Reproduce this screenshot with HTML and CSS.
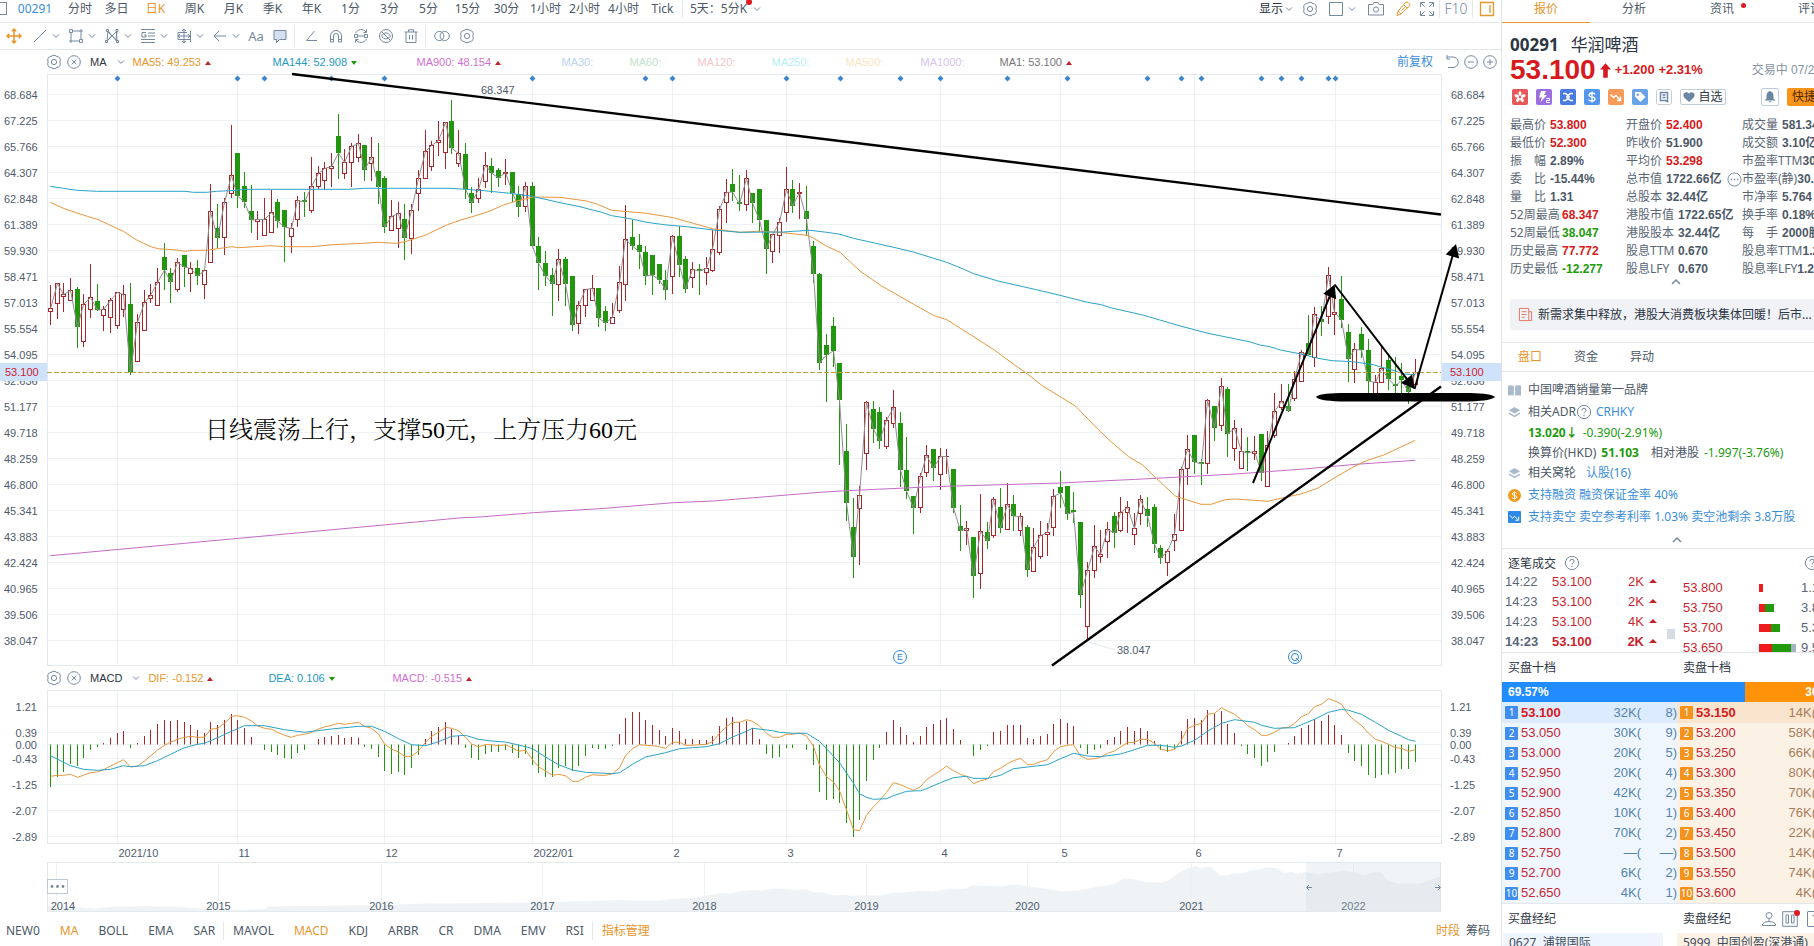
FILE: index.html
```html
<!DOCTYPE html>
<html lang="zh-CN">
<head>
<meta charset="utf-8">
<title>00291 华润啤酒</title>
<link rel="stylesheet" href="styles.css">
</head>
<body>
<svg class="defs" aria-hidden="true">
  <symbol id="gear" viewBox="0 0 16 16"><path d="M6 1.8Q8 .6 10 1.8Q10.6 2.9 12.6 2.9Q14.6 4 14.3 6.2Q13.4 8 14.3 9.8Q14.6 12 12.6 13.1Q10.6 13.1 10 14.2Q8 15.4 6 14.2Q5.4 13.1 3.4 13.1Q1.4 12 1.7 9.8Q2.6 8 1.7 6.2Q1.4 4 3.4 2.9Q5.4 2.9 6 1.8Z"/><circle cx="8" cy="8" r="2.6"/></symbol>
  <symbol id="close" viewBox="0 0 16 16"><circle cx="8" cy="8" r="6.3"/><path d="M5.7 5.7l4.6 4.6M10.3 5.7l-4.6 4.6"/></symbol>
  <symbol id="caret" viewBox="0 0 8 8"><path d="M1 2.4l3 3 3-3"/></symbol>
  <symbol id="caret-up" viewBox="0 0 10 8"><path d="M1 6l4-4 4 4" stroke-width="1.5"/></symbol>
  <symbol id="help" viewBox="0 0 16 16"><circle cx="8" cy="8" r="6.6"/><path d="M5.9 6.4q0-2.1 2.1-2.1t2.1 1.9q0 1-1.1 1.6T8 9.4M8 10.8v1.2"/></symbol>
  <symbol id="layers" viewBox="0 0 14 14"><path d="M7 1l6 3.6-6 3.6-6-3.6z" fill="currentColor" stroke="none"/><path d="M1 7.6l6 3.6 6-3.6" stroke-width="1.6"/></symbol>
</svg>
<div class="app">
  <main class="main">
    <nav class="periods" aria-label="周期">
      <button class="window-toggle" aria-label="窗口"></button>
      <button class="code">00291</button>
      <button class="period first">分时</button>
      <button class="period">多日</button>
      <button class="period active">日K</button>
      <button class="period">周K</button>
      <button class="period">月K</button>
      <button class="period">季K</button>
      <button class="period">年K</button>
      <button class="period">1分</button>
      <button class="period">3分</button>
      <button class="period">5分</button>
      <button class="period">15分</button>
      <button class="period">30分</button>
      <button class="period">1小时</button>
      <button class="period">2小时</button>
      <button class="period">4小时</button>
      <button class="period">Tick</button>
      <button class="combo">5天：5分K<span class="dot"></span><svg class="ic caret"><use href="#caret"/></svg></button>
      <div class="view-tools">
        <button class="dark">显示<svg class="ic caret"><use href="#caret"/></svg></button>
        <button class="w26" aria-label="设置"><svg class="ic"><use href="#gear"/></svg></button>
        <button class="w38" aria-label="布局"><svg class="ic" viewBox="0 0 16 16"><path d="M1.5 1.5h13v13h-13z"/></svg><svg class="ic caret"><use href="#caret"/></svg></button>
        <button class="w30" aria-label="截图"><svg class="ic" viewBox="0 0 16 16"><path d="M.5 3.5h4.3l1-2h4.4l1 2h4.3v10.500h-15z"/><circle cx="8" cy="8.500" r="2.600"/></svg></button>
        <button class="w24 active" aria-label="画笔"><svg class="ic" viewBox="0 0 16 16"><path d="M10 2l1.200-.9q.8-.4 1.600.3l1.700 1.700q.7.800.2 1.500L6 13l-4 1.600L3.200 10z M8.600 3.600l3.800 3.800M6.800 9.300l3-3M3.200 10l3 3"/></svg></button>
        <button class="w24" aria-label="全屏"><svg class="ic" viewBox="0 0 16 16"><path d="M1.500 6V1.500H6M10 1.500h4.500V6M14.500 10v4.500H10M6 14.500H1.500V10M2 2l3.700 3.700M14 2l-3.700 3.700M14 14l-3.700-3.700M2 14l3.700-3.700"/></svg></button>
        <button class="w33 sep f10">F10</button>
        <button class="w29 sep active" aria-label="侧栏"><svg class="ic" viewBox="0 0 16 16"><path d="M1.500 1.500h13v13h-13zM11 4v8" stroke-width="1.300"/></svg></button>
      </div>
    </nav>

    <div class="tools" role="toolbar" aria-label="画线工具">
      <button class="w28 active" aria-label="移动"><svg class="ic" viewBox="0 0 16 16"><path d="M8 1v14M1 8h14M5.800 3.200L8 1l2.200 2.200M5.800 12.800L8 15l2.200-2.200M3.200 5.800L1 8l2.200 2.200M12.800 5.800L15 8l-2.200 2.200" stroke-width="1.500"/></svg></button>
      <button class="drop" aria-label="线段"><svg class="ic" viewBox="0 0 16 16"><path d="M2 14L14 2"/></svg><svg class="ic caret"><use href="#caret"/></svg></button>
      <button class="drop" aria-label="矩形"><svg class="ic" viewBox="0 0 16 16"><path d="M4 3h7.500M13 5v6.500M11 13H5M3 11V5"/><path d="M1.500 1.500h3v3h-3zM11.500 11.500h3v3h-3z"/><path d="M12 2h2v2h-2zM2 12h2v2H2z"/></svg><svg class="ic caret"><use href="#caret"/></svg></button>
      <button class="drop" aria-label="形态"><svg class="ic" viewBox="0 0 16 16"><path d="M3 13L4 3l8 9.500L13 3 3 13l5-5.500 5 5.500L12.500 4M4 4l4 4"/><path d="M2.500 1.500h2v2h-2zM12 1.500h2v2h-2zM1.500 12.500h2v2h-2zM12.500 12.500h2v2h-2z"/></svg><svg class="ic caret"><use href="#caret"/></svg></button>
      <button class="drop" aria-label="江恩"><svg class="ic" viewBox="0 0 16 16"><path d="M1 1.500h14M8 5h7M8 8h7M1 11.500h14M1 14.500h14M6 4.500H2v4.500h4V7H4"/></svg><svg class="ic caret"><use href="#caret"/></svg></button>
      <button class="drop" aria-label="测量"><svg class="ic" viewBox="0 0 16 16"><path d="M8 1v14M2 4.500h9M2 4.500v7h12M14.500 3v11M2 8h12M12 6l2 2-2 2M4 6L2 8l2 2M6 3l2-2 2 2M6 13l2 2 2-2"/></svg><svg class="ic caret"><use href="#caret"/></svg></button>
      <button class="drop" aria-label="箭头"><svg class="ic" viewBox="0 0 16 16"><path d="M14 8H2.500M7 3L2 8l5 5"/></svg><svg class="ic caret"><use href="#caret"/></svg></button>
      <button class="w24 aa">Aa</button>
      <button class="w24" aria-label="注释"><svg class="ic" viewBox="0 0 16 16"><path d="M2 2.500h12v9H7.500L4.500 14.500v-3H2z" fill="#d3deee"/></svg></button>
      <span class="rule"></span>
      <button class="w25" aria-label="角度"><svg class="ic" viewBox="0 0 16 16"><path d="M11.500 3L3.500 12.500H14"/></svg></button>
      <button class="w25" aria-label="磁吸"><svg class="ic" viewBox="0 0 16 16"><path d="M2.500 14V8a5.500 5.500 0 0 1 11 0v6h-3V8a2.500 2.500 0 0 0-5 0v6zM2.500 11.500h3M10.500 11.500h3"/></svg></button>
      <button class="w25" aria-label="连续画线"><svg class="ic" viewBox="0 0 16 16"><path d="M2.500 5a6.300 6.300 0 0 1 10.500-1M13.500 11A6.300 6.300 0 0 1 3 12M13.500 1.500V4.500h-3M2.500 14.500v-3h3M4.500 8h7"/><path d="M1.500 6.500h3v3h-3zM11.500 6.500h3v3h-3z"/></svg></button>
      <button class="w25" aria-label="隐藏"><svg class="ic" viewBox="0 0 16 16"><circle cx="8" cy="8" r="6.500"/><path d="M3.500 3.500l9 9M3.500 8q2-3.200 4.500-3.200T12.500 8Q10.500 11 8 11 5.500 11 3.500 8z"/></svg></button>
      <button class="w25" aria-label="删除"><svg class="ic" viewBox="0 0 16 16"><path d="M1.500 4h13M5.500 4V1.800h5V4M3 4v10.500h10V4M6.500 7v4.500M9.500 7v4.500"/></svg></button>
      <span class="rule"></span>
      <button class="w25" aria-label="对比"><svg class="ic" viewBox="0 0 16 16"><circle cx="5.300" cy="8" r="4.600"/><circle cx="10.700" cy="8" r="4.600"/></svg></button>
      <button class="w25" aria-label="设置"><svg class="ic"><use href="#gear"/></svg></button>
    </div>

    <div class="legend">
      <button aria-label="指标设置"><svg class="ic"><use href="#gear"/></svg></button>
      <button aria-label="关闭指标"><svg class="ic"><use href="#close"/></svg></button>
      <button class="legend-name">MA<svg class="ic caret"><use href="#caret"/></svg></button>
      <div class="legend-values ma">
        <span class="c-orange">MA55: 49.253 <i class="tri up"></i></span>
        <span class="c-cyan">MA144: 52.908 <i class="tri down"></i></span>
        <span class="c-violet">MA900: 48.154 <i class="tri up"></i></span>
        <span class="p1">MA30:</span><span class="p2">MA60:</span><span class="p3">MA120:</span><span class="p4">MA250:</span><span class="p5">MA500:</span><span class="p6">MA1000:</span>
        <span class="c-gray">MA1: 53.100 <i class="tri up"></i></span>
      </div>
      <div class="legend-tools">
        <button class="adjust">前复权</button>
        <button aria-label="还原"><svg class="ic" viewBox="0 0 16 16"><path d="M3 3H9a5.200 5.200 0 0 1 0 10.500H4M3 1v4h3"/></svg></button>
        <button aria-label="缩小"><svg class="ic" viewBox="0 0 16 16"><circle cx="8" cy="8" r="6.300"/><path d="M5 8h6"/></svg></button>
        <button aria-label="放大"><svg class="ic" viewBox="0 0 16 16"><circle cx="8" cy="8" r="6.300"/><path d="M5 8h6M8 5v6"/></svg></button>
      </div>
    </div>

    <svg class="chart price" id="price" viewBox="0 74 1501 592" role="img" aria-label="日K线"></svg>

    <div class="legend">
      <button aria-label="指标设置"><svg class="ic"><use href="#gear"/></svg></button>
      <button aria-label="关闭指标"><svg class="ic"><use href="#close"/></svg></button>
      <button class="legend-name">MACD<svg class="ic caret"><use href="#caret"/></svg></button>
      <div class="legend-values macd">
        <span class="c-orange">DIF: -0.152 <i class="tri up"></i></span>
        <span class="c-cyan">DEA: 0.106 <i class="tri down"></i></span>
        <span class="c-violet">MACD: -0.515 <i class="tri up"></i></span>
      </div>
    </div>

    <svg class="chart" id="macd" viewBox="0 690 1501 172" role="img" aria-label="MACD"></svg>
    <svg class="chart" id="range" viewBox="0 862 1501 50" role="img" aria-label="时间范围"></svg>

    <nav class="indicators" aria-label="指标">
      <div class="group"><button>NEW0</button><button class="active">MA</button><button>BOLL</button><button>EMA</button><button>SAR</button></div>
      <div class="group"><button>MAVOL</button><button class="active">MACD</button><button>KDJ</button><button>ARBR</button><button>CR</button><button>DMA</button><button>EMV</button><button>RSI</button></div>
      <div class="group"><button class="active">指标管理</button></div>
      <div class="group end"><button class="active">时段</button><button>筹码</button></div>
    </nav>
  </main>

  <aside class="side">
    <div class="panel">
      <nav class="side-tabs" aria-label="资料">
        <button class="active">报价</button><button>分析</button><button>资讯<span class="dot"></span></button><button>评论</button>
      </nav>

      <section class="quote">
        <h1><b>00291</b>华润啤酒</h1>
        <div class="last">
          <strong>53.100</strong>
          <svg class="arrow" viewBox="0 0 12 16"><path d="M6 0l6 7H8.500v9h-5V7H0z"/></svg>
          <span class="change">+1.200 +2.31%</span>
          <span class="status">交易中 07/20</span>
        </div>
        <div class="badges">
          <svg class="badge" viewBox="0 0 16 16"><rect width="16" height="16" rx="2" fill="#e8585a"/><g fill="#fff"><ellipse cx="8" cy="4.600" rx="1.500" ry="2.400"/><ellipse cx="8" cy="4.600" rx="1.500" ry="2.400" transform="rotate(72 8 8)"/><ellipse cx="8" cy="4.600" rx="1.500" ry="2.400" transform="rotate(144 8 8)"/><ellipse cx="8" cy="4.600" rx="1.500" ry="2.400" transform="rotate(216 8 8)"/><ellipse cx="8" cy="4.600" rx="1.500" ry="2.400" transform="rotate(288 8 8)"/></g></svg>
          <svg class="badge" viewBox="0 0 16 16"><rect width="16" height="16" rx="2" fill="#9b6fe0"/><path d="M5 2h5L8 6h3l-6.500 7L6 8.500H3z" fill="#fff"/><path d="M10.500 9.500h3v2h-3v2h3.500" fill="none" stroke="#fff"/></svg>
          <svg class="badge" viewBox="0 0 16 16"><rect width="16" height="16" rx="2" fill="#4a7be0"/><path d="M3 4.500h2.500l2.500 2 2.500-2H13M3 11.500h2.500l2.500-2 2.500 2H13M6 8h4" fill="none" stroke="#fff" stroke-width="1.500"/></svg>
          <svg class="badge" viewBox="0 0 16 16"><rect width="16" height="16" rx="2" fill="#5396ec"/><path d="M11 5.500Q10.500 4 8 4T5 6q0 1.600 3 2t3 2q0 2-3 2t-3.200-1.500M8 2.500v11" fill="none" stroke="#fff" stroke-width="1.300"/></svg>
          <svg class="badge" viewBox="0 0 16 16"><rect width="16" height="16" rx="2" fill="#f79a5a"/><path d="M2.500 5.500l3 3 2.500-2 4 4.500M12.500 7.500v4H9" fill="none" stroke="#fff" stroke-width="1.400"/></svg>
          <svg class="badge" viewBox="0 0 16 16"><rect width="16" height="16" rx="2" fill="#68a3ea"/><path d="M3 3h5.500l5 5-5 5L3 7.500z" fill="#fff"/><circle cx="5.800" cy="5.800" r="1.200" fill="#68a3ea"/></svg>
          <svg class="badge" viewBox="0 0 16 16"><rect x=".5" y=".5" width="15" height="15" rx="2" fill="#fff" stroke="#c3ccd6"/><path d="M4.500 3.500h7V12.500l-2-1H4.500zM6.500 6h3M6.500 8.500h3" fill="none" stroke="#6b86a3" stroke-width="1.500"/></svg>
          <button class="fav"><svg viewBox="0 0 12 11"><path d="M6 10.500L1 5.800Q-.3 3.500 1.200 1.600 3.500-.5 6 2 8.500-.5 10.800 1.600 12.300 3.500 11 5.800z"/></svg>自选</button>
          <button class="bell" aria-label="提醒"><svg viewBox="0 0 12 12"><path d="M6 0Q9.500 1 9.500 5v2.500L11.500 9.500H.5L2.500 7.500V5Q2.500 1 6 0zM4.500 10.300h3L6 11.800z"/></svg></button>
          <button class="quick">快捷交易</button>
        </div>
        <dl class="stats" id="stats"></dl>
        <button class="fold" aria-label="收起"><svg class="ic"><use href="#caret-up"/></svg></button>
      </section>

      <a class="news" href="#"><svg viewBox="0 0 16 16"><path d="M1.500 1.500h10v13h-10zM11.500 5h3v9.500h-3M4 5h5M4 8h5M4 11h3"/></svg>新需求集中释放，港股大消费板块集体回暖！后市...</a>

      <nav class="sub-tabs" aria-label="盘面">
        <button class="active">盘口</button><button>资金</button><button>异动</button>
      </nav>

      <section class="facts">
        <div class="r22"><svg class="fi" viewBox="0 0 14 14"><path d="M0 2q3.500-1.500 6.300 0v10.500Q3.500 11.500 0 12.500zM7.700 2q3-1.500 6.300 0v10.500q-3.300-1-6.300 0z" fill="currentColor" stroke="none"/></svg>中国啤酒销量第一品牌</div>
        <div class="r22"><svg class="fi"><use href="#layers"/></svg>相关ADR<svg class="ic help"><use href="#help"/></svg><a href="#">CRHKY</a></div>
        <div class="r20 in green"><b>13.020↓</b><span>-0.390(-2.91%)</span></div>
        <div class="r20 in">换算价(HKD) <b class="green">51.103</b><span class="rel">相对港股</span><span class="green">-1.997(-3.76%)</span></div>
        <div class="r20"><svg class="fi"><use href="#layers"/></svg>相关窝轮<a class="warrant" href="#">认股(16)</a></div>
        <div class="r24"><svg class="fi" viewBox="0 0 14 14"><circle cx="7" cy="7" r="7" fill="#f09a1c" stroke="none"/><path d="M9.500 5Q9 3.700 7 3.700T4.600 5.300Q4.600 6.600 7 7t2.400 1.700Q9.400 10.300 7 10.300T4.500 9M7 2.500v9" stroke="#fff"/></svg><a href="#">支持融资 融资保证金率 40%</a></div>
        <div class="r20"><svg class="fi" viewBox="0 0 14 14"><rect width="14" height="13" rx="1" fill="#2e8ae6" stroke="none"/><path d="M2 4.500l3 3.500 2-2.500 3.500 4M11.500 6v4H8" stroke="#fff"/></svg><a href="#">支持卖空 卖空参考利率 1.03% 卖空池剩余 3.8万股</a></div>
        <button class="fold" aria-label="收起"><svg class="ic"><use href="#caret-up"/></svg></button>
      </section>

      <section class="ticks">
        <h2>逐笔成交<svg class="ic help"><use href="#help"/></svg><svg class="ic help end"><use href="#help"/></svg></h2>
        <div class="tick-body">
          <table class="tick-list">
            <tr><td>14:22</td><td>53.100</td><td>2K</td><td><i class="tri up"></i></td></tr>
            <tr><td>14:23</td><td>53.100</td><td>2K</td><td><i class="tri up"></i></td></tr>
            <tr><td>14:23</td><td>53.100</td><td>4K</td><td><i class="tri up"></i></td></tr>
            <tr class="now"><td>14:23</td><td>53.100</td><td>2K</td><td><i class="tri up"></i></td></tr>
          </table>
          <span class="thumb"></span>
          <table class="spread" id="spread"></table>
        </div>
      </section>

      <section>
        <div class="pair"><h2>买盘十档</h2><h2>卖盘十档</h2></div>
        <div class="ratio"><span style="width:69.57%">69.57%</span><span>30.43%</span></div>
        <div class="book">
          <table class="bid" id="bid"></table>
          <table class="ask" id="ask"></table>
        </div>
      </section>

      <section class="brokers">
        <div class="pair"><h2>买盘经纪</h2><h2>卖盘经纪
          <svg class="ic bi" viewBox="0 0 16 16"><circle cx="8" cy="4.500" r="3"/><path d="M1.500 14.500v-1.500Q3 10.500 8 10.500T14.500 13v1.500zM8 7.500v3"/></svg>
          <span class="with-dot"><svg class="ic" viewBox="0 0 16 16"><path d="M.7.7h14.600v14.600H.7zM4 4h2.500v8H4zM9.500 4H12v8H9.500z"/></svg><span class="dot"></span></span>
          <span class="one">1</span></h2></div>
        <div class="pair rows"><p class="buy">0627&nbsp; 浦银国际</p><p class="sell">5999&nbsp; 中国创盈(深港通)</p></div>
      </section>
    </div>
  </aside>
</div>
<script src="app.js"></script>
</body>
</html>
```

FILE: styles.css
```css
* { box-sizing: border-box; }
body {
  margin: 0;
  height: 100vh;
  overflow: hidden;
  background: #fff;
  color: #4c5867;
  font: 12px/18px "Noto Sans", "Noto Sans CJK SC", sans-serif;
}
button {
  margin: 0; padding: 0; border: 0; background: none;
  color: inherit; font: inherit; cursor: pointer;
  display: inline-flex; align-items: center; justify-content: center;
  white-space: nowrap; flex: none;
}
a { color: #3a8dd9; text-decoration: none; }
h1, h2, p, dl, dd, dt { margin: 0; font-weight: 400; }
table { border-collapse: collapse; border-spacing: 0; }
td { padding: 0; white-space: nowrap; }
.defs { position: absolute; width: 0; height: 0; }
.ic { width: 16px; height: 16px; fill: none; stroke: currentColor; stroke-width: 1; flex: none; color: #7589a0; }
.ic.caret { width: 8px; height: 8px; }
.active, .active .ic { color: #e8952b; }
.dot { width: 6px; height: 6px; border-radius: 50%; background: #dd1a1f; }

.app { display: flex; height: 100%; }
.main { flex: 1; min-width: 0; display: flex; flex-direction: column; }

/* period bar */
.periods { display: flex; height: 23px; padding-bottom: 5px; border-bottom: 1px solid #e4e7ea; align-items: center; }
.window-toggle { width: 7px; height: 13px; border: 1px solid #7589a0; border-left: 0; }
.code { width: 56px; color: #3a8dd9; }
.period { width: 39px; }
.period.first { width: 34px; }
.combo { position: relative; padding-left: 7px; gap: 6px; border-left: 1px solid #e4e7ea; }
.combo .dot { position: absolute; right: 9px; top: -1px; }
.view-tools { display: flex; align-items: center; margin-left: auto; height: 18px; }
.view-tools button { height: 18px; }
.view-tools .dark { color: #2c3542; gap: 2px; padding-right: 4px; }
.sep { border-left: 1px solid #e4e7ea; }
.f10 { font-size: 14px; font-weight: 300; color: #7589a0; }
.w24 { width: 24px; } .w25 { width: 25px; } .w26 { width: 26px; } .w28 { width: 28px; }
.w29 { width: 29px; } .w30 { width: 30px; } .w33 { width: 33px; }
.w38 { width: 38px; gap: 4px; }

/* drawing tools */
.tools { display: flex; align-items: center; height: 27px; border-bottom: 1px solid #e4e7ea; }
.drop { width: 36px; gap: 4px; }
.aa { font-size: 13px; color: #7589a0; }
.rule { width: 1px; height: 20px; background: #e4e7ea; margin: 0 3px 0 2px; flex: none; }

/* indicator legends */
.legend { display: flex; align-items: center; height: 24px; padding-left: 46px; font: 11px/16px "Liberation Sans", "Noto Sans CJK SC", sans-serif; gap: 4px; }
.legend-name { color: #2c3542; gap: 10px; padding-left: 4px; margin-right: 4px; }
.legend-values { display: grid; white-space: nowrap; }
.ma { grid-template-columns: 140px 144px 145px 68px 68px 74px 74px 75px 79px auto; }
.macd { grid-template-columns: 120px 124px auto; }
.legend-tools { display: flex; gap: 3px; margin-left: auto; padding-right: 3px; }
.legend-tools .adjust { color: #3a8dd9; font-size: 12px; margin-right: 8px; }
.c-orange { color: #e8952b; } .c-cyan { color: #2599c2; } .c-violet { color: #cf6fcf; } .c-gray { color: #777; }
.p1 { color: #b9d4ee; } .p2 { color: #bfe3cd; } .p3 { color: #f3c6cb; }
.p4 { color: #b5eef5; } .p5 { color: #fbe3c0; } .p6 { color: #d8c3ec; }
.tri { display: inline-block; border: 3px solid transparent; margin-left: 1px; }
.tri.up { border-bottom: 4px solid #c02026; border-top: 0; vertical-align: 1px; }
.tri.down { border-top: 4px solid #239a0d; border-bottom: 0; vertical-align: 1px; }

/* charts */
.chart { display: block; width: 100%; height: auto; flex: none; font: 11px "Liberation Sans", "Noto Sans CJK SC", sans-serif; fill: none; }
.price { overflow: visible; position: relative; }
.chart text { fill: #4f5b6c; }
.grid { stroke: #edf1f3; }
.frame { stroke: #e3e9ec; }
.up-bar { stroke: #a9262b; fill: #fff; }
.down-bar { stroke: #22960f; fill: #22960f; }
.wick-up { stroke: #a9262b; }
.wick-down { stroke: #22960f; }
.close-line { stroke: #8d8d8d; }
.line-orange { stroke: #e8983f; }
.line-cyan { stroke: #2ba2c6; }
.line-violet { stroke: #c56cc5; }
.last-line { stroke: #b9a041; stroke-dasharray: 5 2; }
.last-box { fill: #cfe2fc; }
.chart .last-text { fill: #cc1f2d; }
.event { fill: #3d86cf; }
.ring { stroke: #2e86d6; }
.chart .ring-text { fill: #2e86d6; font-size: 9px; text-anchor: middle; }
.trend { stroke: #000; stroke-width: 2.4; }
.trend.thin { stroke-width: 2; }
.ink { fill: #000; }
.chart .note { fill: #000; font: 300 24px "Liberation Serif", "Noto Serif CJK SC", "Noto Sans CJK SC", serif; }
.area { fill: #eff3f6; }
.window { fill: #ced6e0; fill-opacity: .28; }
.handle { stroke: #7589a0; }
.more { fill: #fff; stroke: #c0cad6; }
.dots { fill: #7589a0; }

/* bottom indicators */
.indicators { display: flex; flex: 1; align-items: center; padding: 4px 11px 0 6px; }
.group { display: flex; gap: 20px; }
.group + .group { margin-left: 8px; padding-left: 9px; border-left: 1px solid #e4e7ea; }
.group.end { margin-left: auto; border: 0; gap: 6px; }

/* side panel */
.side { width: 313px; flex: none; border-left: 1px solid #dfe4e8; overflow: hidden; background: #fff; }
.panel { width: 350px; }
.side-tabs { display: flex; height: 23px; border-bottom: 1px solid #e4e7ea; }
.side-tabs button { position: relative; width: 88px; height: 23px; padding-bottom: 5px; }
.side-tabs .active { border-bottom: 1px solid #e8952b; }
.side-tabs .dot { position: absolute; right: 20px; top: 3px; width: 5px; height: 5px; }

.quote { padding: 12px 0 0 8px; }
h1 { font-size: 17px; line-height: 20px; color: #2c3542; }
h1 b { margin-right: 12px; }
.last { display: flex; align-items: center; height: 30px; color: #d61a20; font-family: "Liberation Sans", "Noto Sans CJK SC", sans-serif; }
.last strong { font-size: 28px; }
.arrow { width: 11px; height: 15px; fill: #d61a20; margin: 0 4px; }
.change { font-size: 13px; font-weight: 700; }
.status { color: #8793a1; margin-left: auto; margin-right: 31px; }
.badges { display: flex; align-items: center; gap: 8px; height: 18px; margin-top: 3px; padding-left: 2px; }
.badge { width: 16px; height: 16px; flex: none; }
.fav, .bell { border: 1px solid #c3ccd6; border-radius: 2px; color: #2c3542; height: 16px; }
.fav { width: 46px; gap: 3px; }
.fav svg, .bell svg { width: 12px; height: 12px; fill: #6b86a3; }
.bell { width: 18px; height: 18px; margin-left: 27px; }
.quick { width: 58px; height: 18px; background: #f9941a; color: #4b2b08; border-radius: 2px; }

.stats { display: grid; grid-template-columns: repeat(3, 116px); grid-auto-rows: 18px; margin-top: 10px; color: #5a6675; }
.stats div { display: flex; white-space: nowrap; position: relative; }
.stats dt { min-width: 40px; }
.stats .wide { min-width: 52px; }
.stats dd { font: 700 12px/18px "Liberation Sans", "Noto Sans CJK SC", sans-serif; color: #4c5867; }
.stats .red { color: #d61a20; } .stats .green { color: #239a0d; }
.stats .more-info { position: absolute; right: 0; top: 2px; width: 15px; height: 15px; }
.fold { display: flex; width: 100%; }
.fold .ic { width: 10px; height: 8px; }
.quote .fold { height: 8px; padding-right: 11px; }
.news { display: flex; align-items: center; gap: 5px; height: 31px; margin: 13px 0 12px 8px; padding-left: 8px; background: #f0f2f6; border-radius: 3px; color: #2c3542; }
.news svg { width: 15px; height: 15px; fill: none; stroke: #e2705c; }
.sub-tabs { display: flex; height: 30px; border: solid #e4e7ea; border-width: 1px 0; }
.sub-tabs button { width: 56px; }

.facts { padding: 7px 0 0 6px; border-bottom: 1px solid #e4e7ea; }
.facts div { display: flex; align-items: center; white-space: nowrap; }
.r20 { height: 20px; } .r22 { height: 22px; } .r24 { height: 24px; }
.fi { width: 13px; height: 13px; margin-right: 7px; fill: none; stroke: currentColor; color: #a9bacc; flex: none; }
.facts .in { padding-left: 20px; gap: 5px; }
.green { color: #239a0d; }
.rel { margin-left: 7px; }
.warrant { margin-left: 10px; }
.facts .help { margin-right: 4px; }
.facts .fold { height: 21px; padding: 4px 7px 0 0; }

h2 { font-size: 12px; line-height: 29px; color: #2c3542; }
.ticks h2 { display: flex; align-items: center; gap: 8px; height: 28px; padding-left: 6px; }
.ticks .end { margin-left: auto; margin-right: 32px; }
.tick-body { display: grid; grid-template-columns: 165px 8px 1fr; height: 76px; overflow: hidden; border-bottom: 1px solid #e4e7ea; align-items: start; }
.tick-list, .spread, .bid, .ask, .ratio { font: 13px/20px "Liberation Sans", sans-serif; color: #5a6675; table-layout: fixed; }
.tick-list { width: 165px; margin-top: -5px; }
.tick-list td:nth-child(1) { width: 50px; padding-left: 3px; }
.tick-list td:nth-child(2) { width: 42px; color: #cc1f2d; }
.tick-list td:nth-child(3) { width: 50px; text-align: right; color: #cc1f2d; }
.tick-list td:nth-child(4) { padding-left: 4px; }
.tick-list .tri { border-left-width: 4px; border-right-width: 4px; vertical-align: 3px; }
.now { font-weight: 700; }
.thumb { height: 10px; background: #d5dbe3; margin-top: 52px; }
.spread { margin: 1px 0 0 8px; width: 169px; }
.spread td:nth-child(1) { width: 76px; color: #cc1f2d; }
.spread td:nth-child(2) { width: 42px; }
.spread .stack { display: flex; height: 8px; }
.s-red { background: #ee1c1c; } .s-green { background: #239a0d; } .s-gray { background: #a4b3c2; }

.pair { display: grid; grid-template-columns: 1fr 1fr; height: 29px; }
.pair h2 { padding-left: 6px; display: flex; align-items: center; }
.ratio { display: flex; height: 20px; color: #fff; font-size: 12px; font-weight: 700; background: #ff9209; justify-content: space-between; }
.ratio span:first-child { background: #218cff; padding-left: 6px; }
.ratio span:last-child { padding-right: 6px; }
.book { display: grid; grid-template-columns: 1fr 1fr; border-bottom: 1px solid #e4e7ea; }
.bid { background: #eff6fe; } .ask { background: #fcf1e5; }
.book tr { height: 20px; }
.book tr:first-child { height: 21px; }
.bid tr:first-child { background: #dcebfd; } .ask tr:first-child { background: #f9e4cd; }
.book td:nth-child(1) { width: 19px; padding-left: 3px; }
.book td:nth-child(2) { width: 50px; color: #c32733; }
.book td:nth-child(3) { width: 70px; text-align: right; }
.book td:nth-child(4) { width: 36px; text-align: right; }
.book tr:first-child td:nth-child(2) { font-weight: 700; color: #d61a20; }
.bid td { color: #5384b0; } .ask td { color: #a87d5c; }
.level { display: block; width: 13px; height: 13px; border-radius: 1px; color: #fff; font: 10px/13px "Noto Sans", sans-serif; text-align: center; }
.bid .level { background: #3f8eee; } .ask .level { background: #f5921c; }
.bi { margin-left: 30px; }
.with-dot { position: relative; display: flex; margin-left: 5px; }
.with-dot .dot { position: absolute; right: -2px; top: -1px; }
.one { width: 16px; height: 16px; margin-left: 9px; border: 1px solid #7589a0; border-radius: 1px; line-height: 14px; padding-left: 3px; color: #7589a0; }
.rows { height: 20px; line-height: 20px; color: #3f4b5a; }
.rows p { padding-left: 6px; white-space: nowrap; }
.buy { background: #eef5fe; margin: 0 14px 0 1px; }
.sell { background: #fcf1e5; }
```

FILE: app.js
```js
const NS = 'http://www.w3.org/2000/svg';
function add(parent, tag, attrs, text) {
  const el = document.createElementNS(NS, tag);
  for (const k in attrs) el.setAttribute(k, attrs[k]);
  if (text !== undefined) el.textContent = text;
  parent.appendChild(el);
  return el;
}
const xOf = i => Math.floor(50.4 + 6.69 * i) + 0.5;
const pairs = s => s.trim().split(/\s+/).map(p => p.split(',').map(Number));
const polyline = (svg, cls, pts) => add(svg, 'polyline', { class: cls, points: pts.map(p => p.join(',')).join(' ') });

/* Candles: direction, body top, body bottom, high, low (thirds of a pixel). */
const early = `r715,725,645,762 r640,701,640,744 r673,679,641,725 r661,691,624,691 g657,773,651,833 r703,815,672,830 r682,718,582,743 g694,721,642,721 r718,737,708,782 r691,743,685,788
r667,767,667,775 r673,718,645,740 g702,906,640,914 r757,874,733,874 r697,782,662,782 r676,685,642,698 r637,706,594,706 g561,602,519,659 g609,638,594,698 r577,659,564,665
g556,593,556,648 r595,610,576,665 g594,620,570,644 r601,643,601,686 r424,577,342,577 g475,506,403,533 r397,502,384,553 r316,370,166,383 g249,380,249,413 g348,398,307,413
g423,452,345,488 r449,455,423,507 r448,496,385,496 r427,487,360,487 g397,455,388,473 g420,473,420,575 r475,500,460,546 r391,448,380,470 g391,398,367,440 r348,422,262,428
r310,350,288,356 r295,331,276,358 r289,295,250,348 g198,251,132,326 r277,310,238,325 r229,277,220,350 r220,262,193,275 g226,302,226,332 r262,280,202,332 g303,353,219,399
g324,473,318,486 r439,482,391,482 r430,476,397,533 g447,506,403,567 r421,506,403,551 r325,370,301,422 r244,325,181,325 r226,290,214,301 r211,217,154,257 r157,247,157,296
g153,236,91,251 r250,281,181,290 g252,357,220,386 g369,401,351,428 r358,385,324,398 r286,334,247,352 g289,311,264,367 g300,326,294,350 r307,309,267,343 g307,370,307,394
g373,413,349,440 r349,410,337,425 g349,530,337,530 g528,581,501,659 g579,620,543,645 g615,644,595,735 r568,644,538,692 g567,644,561,707 g618,765,618,780 r706,761,694,791
r658,707,658,740 r655,691,616,691 g654,746,654,770 g723,761,708,782 r742,761,699,761 r637,721,588,727 r508,643,405,691 g501,528,450,537 g525,548,492,594 g546,620,528,644
g555,615,555,674 g582,630,582,641 g630,662,601,689 r499,619,495,671 g498,585,469,620 g567,659,559,668 r598,622,577,653 g597,605,583,674 r595,608,562,644 r538,602,482,605
r418,547,409,553 r367,398,327,458 g342,366,297,390 g396,404,315,422 r325,404,301,422 g369,399,369,458 g357,450,357,480 g450,537,450,611 r492,545,492,578 r457,496,445,547
r358,428,291,454 g357,410,331,428 r367,369,339,446 g423,449,348,495 g528,614,514,638 g612,881,609,899 g825,855,793,995 g768,843,741,890 g879,990,879,1182 g1143,1301,1062,1350
g1371,1461,1284,1523 r1276,1316,1248,1484 r997,1151,993,1199 g1017,1077,993,1118 g1026,1115,1011,1136 r1051,1130,1042,1136 r1012,1060,961,1073 g1059,1202,1026,1250 g1200,1265,1101,1286 g1278,1316,1278,1391
r1219,1313,1209,1328 r1156,1208,1126,1220 g1137,1196,1137,1230 r1159,1214,1134,1259 r1158,1160,1137,1210 g1197,1316,1197,1328 g1368,1383,1305,1440`;
const late = `r985,991,965,1032 g1011,1130,1011,1193 r993,1121,882,1166 g997,1025,968,1044 r898,1007,893,1013 g921,986,864,998 r912,989,850,989 g912,950,885,990 r949,991,939,1005 g982,1112,975,1130
r1042,1115,985,1115 r1006,1070,964,1076 r997,1004,969,1065 r889,983,868,1007 g861,879,813,923 g858,944,858,959 g930,938,877,966 g966,1187,966,1223 r1111,1280,1086,1318 r1039,1112,976,1133
r1063,1070,991,1086 r988,1024,966,1071 g948,1001,936,1043 r937,991,892,994 r922,937,903,996 r985,1003,939,1033 r898,940,885,972 g927,948,892,980 g921,1034,912,1056 g1045,1076,1035,1091
r1054,1088,1049,1127 r1003,1022,942,1052 r808,992,802,992 r748,805,706,853 g705,788,705,821 g786,794,777,854 r601,791,598,821 g618,686,618,722 r559,677,534,692 g567,704,561,768
r685,745,660,782 r754,806,685,806 g753,760,713,812 r754,760,708,779 g702,821,702,842 r736,860,694,860 r634,707,579,713 r603,622,553,628 g618,635,553,635 r538,596,515,602
r457,544,451,544 g429,467,347,467 r343,473,321,500 g357,366,318,407 r226,350,201,371 r337,343,270,402 g297,362,228,383 g396,477,372,543 r448,509,430,548 g402,452,381,473
g450,543,417,580 r547,590,527,595 r505,548,440,548 g480,538,470,567 g552,560,473,580 g528,540,490,590 g560,578,555,610 r517,553,477,560`;
const parse = (s, origin) => s.trim().split(/\s+/).map(t => {
  const [top, bottom, high, low] = t.slice(1).split(',').map(v => Math.floor(origin + v / 3));
  return { up: t[0] === 'r', top, bottom, high, low };
});
const candles = parse(early, 70).concat(parse(late, 200));

const ma144 = '151,349 190,355 230,361 290,364 555,364 580,367 620,367 650,364 690,362 740,358 1050,358 1090,355 1350,355 1440,361 1530,370 1597,379 1680,398 1740,410 1780,421 1800,425 1835,437 1890,446 1940,457 2000,465 2060,470 2140,480 2220,487 2350,486 2380,484 2430,481 2480,487 2520,493 2560,505 2620,518 2690,534 2740,546 2840,577 2890,597 2921,611 2994,633 3087,654 3180,676 3262,697 3304,704 3335,714 3428,735 3541,768 3624,790 3748,815 3779,825 3810,830 3841,840 3903,852 3954,865 3996,872 4058,875 4120,884 4182,902 4213,912 4246,914';
const ma55 = '151,397 190,415 240,432 295,449 370,484 410,510 455,531 475,536 530,540 555,544 580,541 620,541 695,530 715,533 815,527 850,530 935,530 1000,524 1090,520 1130,517 1190,520 1215,515 1240,507 1275,496 1340,465 1380,451 1440,433 1470,423 1510,405 1550,393 1600,381 1680,382 1760,393 1790,402 1835,421 1940,430 2020,443 2080,460 2140,477 2220,487 2270,484 2340,487 2420,496 2440,504 2480,529 2520,547 2580,603 2640,645 2740,702 2800,736 2840,749 2900,787 2983,840 3045,886 3076,907 3128,948 3226,1008 3293,1077 3335,1117 3386,1160 3428,1185 3469,1225 3526,1278 3562,1290 3603,1303 3634,1303 3675,1289 3706,1287 3805,1294 3841,1285 3903,1272 3954,1254 3996,1228 4058,1192 4099,1172 4151,1155 4246,1111';
const ma900 = '151,1457 694,1407 1388,1343 1440,1341 1600,1328 1800,1316 2020,1298 2140,1293 2460,1267 2540,1262 2800,1250 2940,1246 3180,1239 3304,1233 3469,1225 3706,1212 3913,1197 4068,1183 4246,1171';
const months = [[117.5, '2021/10'], [237.5, '11'], [384.5, '12'], [532.5, '2022/01'], [672.5, '2'], [786.5, '3'], [940.5, '4'], [1060.5, '5'], [1194.5, '6'], [1335.5, '7']];

function drawPrice() {
  const svg = document.getElementById('price');
  add(svg, 'rect', { class: 'frame', x: 47.5, y: 74.5, width: 1394, height: 591 });
  months.forEach(([x]) => add(svg, 'path', { class: 'grid', d: `M${x} 75V665` }));
  const labels = '68.684 67.225 65.766 64.307 62.848 61.389 59.930 58.471 57.013 55.554 54.095 52.636 51.177 49.718 48.259 46.800 45.341 43.883 42.424 40.965 39.506 38.047'.split(' ');
  labels.forEach((t, k) => {
    const y = 94.5 + 26 * k;
    add(svg, 'path', { class: 'grid', d: `M48 ${y}H1441` });
    add(svg, 'text', { x: 4, y: y + 4 }, t);
    add(svg, 'text', { x: 1451, y: y + 4 }, t);
  });
  [[0, 47], [1442, 59]].forEach(([x, width]) => add(svg, 'rect', { class: 'last-box', x, y: 363, width, height: 18 }));
  add(svg, 'text', { class: 'last-text', x: 5, y: 376 }, '53.100');
  add(svg, 'text', { class: 'last-text', x: 1450, y: 376 }, '53.100');
  [117, 237, 264, 331, 384, 532, 645, 672, 786, 840, 900, 940, 1007, 1067, 1147, 1181, 1201, 1261, 1281, 1301, 1328, 1335]
    .forEach(x => add(svg, 'path', { class: 'event', d: `M${x + 0.5} 75.500l3 3-3 3-3-3z` }));

  candles.forEach((c, i) => {
    const x = xOf(i);
    if (c.up) {
      add(svg, 'path', { class: 'wick-up', d: `M${x} ${c.high}V${c.top}M${x} ${c.bottom + 1}V${c.low + 1}` });
      add(svg, 'rect', { class: 'up-bar', x: x - 2, y: c.top + 0.5, width: 4, height: Math.max(0.01, c.bottom - c.top) });
    } else {
      add(svg, 'path', { class: 'wick-down', d: `M${x} ${c.high}V${c.low + 1}` });
      add(svg, 'rect', { class: 'down-bar', x: x - 2, y: c.top + 0.5, width: 4, height: Math.max(1, c.bottom - c.top - 1) });
    }
  });
  polyline(svg, 'close-line', candles.map((c, i) => [xOf(i), c.up ? c.top + 0.5 : c.bottom]));
  const scaled = s => pairs(s).map(([x, y]) => [(x / 3).toFixed(1), (70 + y / 3).toFixed(1)]);
  polyline(svg, 'line-violet', scaled(ma900));
  polyline(svg, 'line-orange', scaled(ma55));
  polyline(svg, 'line-cyan', scaled(ma144));
  add(svg, 'path', { class: 'last-line', d: 'M47 372.500H1441' });

  add(svg, 'text', { x: 481, y: 94 }, '68.347');
  add(svg, 'text', { x: 1117, y: 654 }, '38.047');
  add(svg, 'path', { class: 'frame', d: 'M1089 642L1115 650' });
  add(svg, 'text', { class: 'note', x: 205, y: 438 }, '日线震荡上行，支撑50元，上方压力60元');

  add(svg, 'circle', { class: 'ring', cx: 900, cy: 657, r: 6.5 });
  add(svg, 'text', { class: 'ring-text', x: 900, y: 660 }, 'E');
  add(svg, 'circle', { class: 'ring', cx: 1295, cy: 657, r: 6.5 });
  add(svg, 'circle', { class: 'ring', cx: 1295, cy: 657, r: 3.5 });
  add(svg, 'path', { class: 'ring', d: 'M1296 658l3 3' });

  add(svg, 'path', { class: 'trend', d: 'M292 74L1441 214.500' });
  add(svg, 'path', { class: 'trend', d: 'M1052 665.500L1441 386.500' });
  [[1253, 483, 1334.6, 284.5], [1334.6, 284.5, 1414.5, 389], [1414.5, 389, 1456, 244]].forEach(([x1, y1, x2, y2]) => {
    const a = Math.atan2(y2 - y1, x2 - x1);
    add(svg, 'path', { class: 'trend thin', d: `M${x1} ${y1}L${x2 - 8 * Math.cos(a)} ${y2 - 8 * Math.sin(a)}` });
    add(svg, 'path', { class: 'ink', d: 'M0 0L-13 -7V7z', transform: `translate(${x2} ${y2}) rotate(${a * 180 / Math.PI})` });
  });
  add(svg, 'path', { class: 'ink', d: 'M1316 397Q1318 393.500 1340 393H1470Q1492 393.500 1495 397Q1492 400.500 1470 401.500H1340Q1318 400.500 1316 397z' });
}

const bars = '380 352 336 311 318 293 270 261 250 235 219 213 263 249 229 210 192 181 184 181 187 195 210 220 187 195 180 163 180 203 232 254 270 276 285 294 296 279 270 254 237 232 228 226 235 231 235 261 267 291 333 341 336 344 323 285 237 214 202 187 207 227 263 293 299 282 276 276 270 278 293 282 315 338 350 350 323 317 333 317 287 263 266 266 257 222 175 156 156 181 195 210 228 205 214 238 238 240 240 228 199 175 171 187 184 205 237 282 293 291 263 263 254 269 315 396 420 417 429 489 530 480 362 299 263 217 181 202 225 247 229 200 192 181 175 208 240 254 288 269 258 217 214 196 196 196 235 237 229 223 193 178 189 199 264 282 270 263 240 231 213 201 213 205 213 243 269 275 267 214 178 175 180 151 162 154 193 220 258 282 293 318 305 276 254 249 229 205 196 178 184 166 196 226 278 302 318 344 353 344 341 338 326 326 305'.split(' ').map(Number);
const dif = '349 346 346 343 352 346 338 336 329 318 308 299 321 318 303 288 270 256 247 238 232 229 232 232 208 205 190 169 167 172 183 197 205 208 217 226 232 226 223 217 207 201 196 190 193 190 187 199 205 222 252 267 276 289 289 273 247 229 217 202 205 212 232 252 260 254 254 257 254 264 274 271 299 320 333 346 343 347 364 364 352 344 346 346 341 323 287 266 254 256 257 260 265 247 247 256 256 254 253 245 220 200 187 187 179 184 198 220 232 232 223 223 219 228 259 315 350 366 392 450 509 512 466 440 422 397 368 374 382 391 380 359 345 332 318 332 343 349 371 362 357 335 325 311 302 295 314 313 305 299 275 260 256 254 288 298 296 292 280 273 261 248 247 238 238 250 267 272 268 240 206 196 190 163 160 143 153 163 179 196 209 226 226 217 204 202 190 170 161 140 133 116 122 133 164 181 196 220 238 244 253 263 265 274 269'.split(' ').map(Number);
const dea = '0,287 3,317 5,328 7,331 9,328 11,317 12,320 14,317 16,302 18,283 20,263 22,253 23,250 25,233 27,214 29,197 32,197 35,209 38,217 42,207 46,199 48,199 50,214 52,236 54,254 56,257 58,245 60,229 62,226 64,238 66,243 68,246 71,260 72,266 74,291 76,314 78,330 80,337 84,341 85,338 87,313 89,291 92,278 94,266 96,263 98,260 100,251 102,231 104,214 105,205 108,212 109,217 111,220 113,220 115,244 118,308 120,370 121,401 122,412 123,418 125,416 126,407 128,394 130,392 131,386 133,368 135,353 137,349 138,355 140,355 142,346 144,326 146,321 149,314 151,296 153,280 155,288 157,290 160,282 162,269 164,256 166,256 168,262 169,258 171,241 173,214 175,190 177,179 180,187 181,196 183,205 186,203 187,194 189,178 191,157 193,148 194,151 196,163 198,187 200,211 202,229 203,239 204,244';

function drawMacd() {
  const svg = document.getElementById('macd');
  add(svg, 'rect', { class: 'frame', x: 47.5, y: 690.5, width: 1394, height: 153 });
  months.forEach(([x, label]) => {
    add(svg, 'path', { class: 'grid', d: `M${x} 691V843` });
    add(svg, 'text', { x: x + 1, y: 857 }, label);
  });
  [[706.5, '1.21'], [732.5, '0.39'], [744.5, '0.00'], [758.5, '-0.43'], [784.5, '-1.25'], [810.5, '-2.07'], [836.5, '-2.89']].forEach(([y, t]) => {
    add(svg, 'path', { class: 'grid', d: `M48 ${y}H1441` });
    add(svg, 'text', { x: 37, y: y + 4, 'text-anchor': 'end' }, t);
    add(svg, 'text', { x: 1450, y: y + 4 }, t);
  });
  bars.forEach((v, i) => {
    if (v !== 254) add(svg, 'path', { class: v < 254 ? 'wick-up' : 'wick-down', d: `M${xOf(i)} 744.500V${Math.round(660 + v / 3)}` });
  });
  polyline(svg, 'line-orange', dif.map((v, i) => [xOf(i), (660 + v / 3).toFixed(1)]));
  polyline(svg, 'line-cyan', pairs(dea).map(([i, v]) => [xOf(i), (660 + v / 3).toFixed(1)]));
}

const history = '48,736 77,742 95,746 110,741 145,738 180,741 205,747 235,750 266,747 268,739 330,737 400,734 420,731 480,729 560,726 600,722 619,720 638,722 657,722 676,716 699,712 704,708 719,700 730,701 742,693 753,690 761,692 772,687 784,686 791,690 807,688 814,698 822,696 833,706 845,704 853,708 868,706 883,706 891,699 906,697 918,692 933,694 944,689 967,686 971,676 1002,679 1013,673 1025,677 1040,684 1063,694 1082,690 1097,680 1113,674 1124,655 1136,659 1143,666 1162,668 1170,658 1177,642 1187,626 1195,618 1200,624 1210,620 1215,632 1220,647 1228,645 1233,640 1243,640 1250,632 1260,628 1267,622 1277,624 1283,638 1292,636 1297,642 1305,635 1317,643 1330,638 1343,632 1350,635 1357,638 1362,646 1367,642 1377,636 1383,640 1385,655 1393,667 1400,671 1420,671 1430,660 1437,652 1441,652';

function drawRange() {
  const svg = document.getElementById('range');
  const pts = pairs(history);
  let d = 'M48 911';
  let k = 0;
  for (let x = 48; x <= 1441; x += 2) {
    while (k < pts.length - 2 && pts[k + 1][0] < x) k++;
    const [x0, y0] = pts[k], [x1, y1] = pts[k + 1];
    const v = y0 + (y1 - y0) * (x - x0) / (x1 - x0) + 2 * Math.sin(x * 1.7);
    d += `L${x} ${(660 + v / 3).toFixed(1)}`;
  }
  add(svg, 'path', { class: 'area', d: d + 'L1441 911z' });
  const years = [[56.5, 2014], [218.5, 2015], [381.5, 2016], [542.5, 2017], [704.5, 2018], [866.5, 2019], [1027.5, 2020], [1191.5, 2021], [1353.5, 2022]];
  years.forEach(([x]) => add(svg, 'path', { class: 'grid', d: `M${x} 863V911` }));
  add(svg, 'rect', { class: 'frame', x: 47.5, y: 862.5, width: 1393, height: 49 });
  years.forEach(([x, t]) => add(svg, 'text', { x: Math.max(x, 63), y: 910, 'text-anchor': 'middle' }, t));
  add(svg, 'rect', { class: 'window', x: 1306, y: 863, width: 135, height: 48 });
  add(svg, 'path', { class: 'handle', d: 'M1312 887.500H1307M1309 885l-2.500 2.500 2.500 2.500M1435 887.500H1440M1438 885l2.500 2.500-2.500 2.500' });
  add(svg, 'rect', { class: 'more', x: 47.5, y: 879.5, width: 20, height: 14 });
  [52, 57.5, 63].forEach(cx => add(svg, 'circle', { class: 'dots', cx, cy: 886.5, r: 1.4 }));
}

const stats = [
  ['最高价', '53.800', 'red'], ['开盘价', '52.400', 'red'], ['成交量', '581.34万'],
  ['最低价', '52.300', 'red'], ['昨收价', '51.900'], ['成交额', '3.10亿'],
  ['振　幅', '2.89%'], ['平均价', '53.298', 'red'], ['市盈率TTM', '30.5'],
  ['委　比', '-15.44%'], ['总市值', '1722.66亿', 'info'], ['市盈率(静)', '30.5'],
  ['量　比', '1.31'], ['总股本', '32.44亿'], ['市净率', '5.764'],
  ['52周最高', '68.347', 'red'], ['港股市值', '1722.65亿'], ['换手率', '0.18%'],
  ['52周最低', '38.047', 'green'], ['港股股本', '32.44亿'], ['每　手', '2000股'],
  ['历史最高', '77.772', 'red'], ['股息TTM', '0.670'], ['股息率TTM', '1.26%'],
  ['历史最低', '-12.277', 'green'], ['股息LFY', '0.670'], ['股息率LFY', '1.26%']
];
document.getElementById('stats').innerHTML = stats.map(([name, value, tone]) => {
  const wide = name.length > 3 ? ' class="wide"' : '';
  const info = tone === 'info' ? '<svg class="ic more-info" viewBox="0 0 16 16"><circle cx="8" cy="8" r="7"/><path d="M4 8h1.500M7.300 8h1.500M10.600 8h1.500" stroke-width="1.500"/></svg>' : '';
  return `<div><dt${wide}>${name}</dt><dd class="${tone || ''}">${value}</dd>${info}</div>`;
}).join('');

const spread = [['53.800', 4, 0, 0, '1.1%'], ['53.750', 6, 9, 0, '3.8%'], ['53.700', 12, 9, 0, '5.3%'], ['53.650', 13, 19, 5, '9.5%']];
document.getElementById('spread').innerHTML = spread.map(([p, r, g, s, t]) =>
  `<tr><td>${p}</td><td><span class="stack"><i class="s-red" style="width:${r}px"></i><i class="s-green" style="width:${g}px"></i><i class="s-gray" style="width:${s}px"></i></span></td><td>${t}</td></tr>`).join('');

const bid = [['53.100', '32K', 8], ['53.050', '30K', 9], ['53.000', '20K', 5], ['52.950', '20K', 4], ['52.900', '42K', 2], ['52.850', '10K', 1], ['52.800', '70K', 2], ['52.750', '—', '—'], ['52.700', '6K', 2], ['52.650', '4K', 1]];
const ask = [['53.150', '14K', 2], ['53.200', '58K', 6], ['53.250', '66K', 5], ['53.300', '80K', 7], ['53.350', '70K', 4], ['53.400', '76K', 5], ['53.450', '22K', 3], ['53.500', '14K', 2], ['53.550', '74K', 4], ['53.600', '4K', 1]];
const bookRows = rows => rows.map(([p, v, n], i) =>
  `<tr><td><span class="level">${i + 1}</span></td><td>${p}</td><td>${v}(</td><td>${n})</td></tr>`).join('');
document.getElementById('bid').innerHTML = bookRows(bid);
document.getElementById('ask').innerHTML = bookRows(ask);

drawPrice();
drawMacd();
drawRange();
```
